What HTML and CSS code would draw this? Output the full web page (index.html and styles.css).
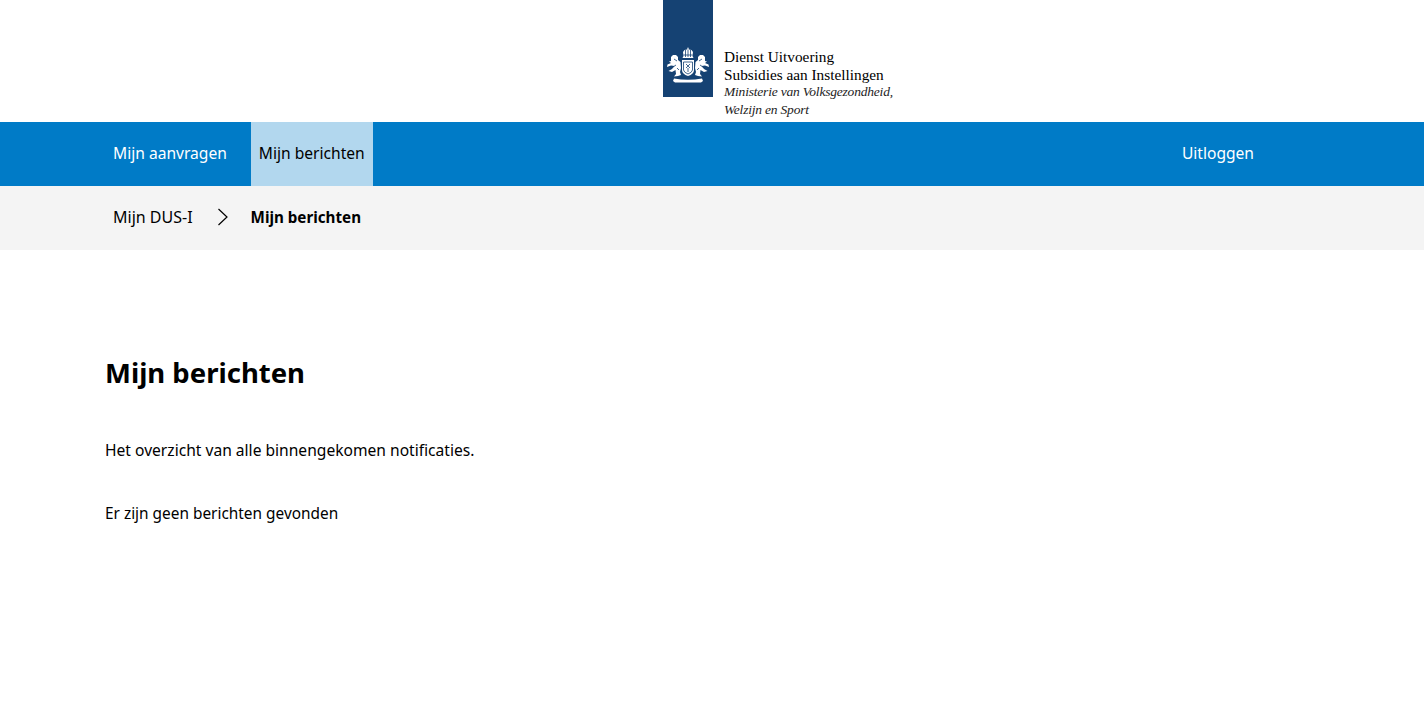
FILE: index.html
```html
<!DOCTYPE html>
<html lang="nl">
<head>
    <title>Mijn berichten</title>
    <link rel="stylesheet" href="styles.css">
</head>
<body>
    <header class="site-header">
        <div class="logo">
            <div class="logo-block">
                <svg class="crest" width="44" height="38" viewBox="0 0 44 38">
                    <g fill="#fff">
                        <!-- crown -->
                        <path d="M22 0 L23 2.500 L25.500 3 L27 5 L26.500 9 L27.500 11 H16.500 L17.500 9 L17 5 L18.500 3 L21 2.500 Z"/>
                        <!-- shield -->
                        <path d="M16 13 H28 V23 Q28 27 22 29 Q16 27 16 23 Z"/>
                        <!-- left lion -->
                        <path d="M7 8 L10 8 L12 10 L12 13 L14.500 15 L15 21 L14 25 L15 28 L12 29 L8 29.500 L10 27 L9.500 23 L6 25 L2.500 24 L6 22 L8.500 19 L5 18.500 L1 20 L1.500 17.500 L5 16 L3 14.500 L5 14 L5 10 Z"/>
                        <!-- right lion -->
                        <path d="M37 8 L34 8 L32 10 L32 13 L29.500 15 L29 21 L30 25 L29 28 L32 29 L36 29.500 L34 27 L34.500 23 L38 25 L41.500 24 L38 22 L35.500 19 L39 18.500 L43 20 L42.500 17.500 L39 16 L41 14.500 L39 14 L39 10 Z"/>
                        <!-- motto band -->
                        <path d="M8 31.500 Q22 34 36 31.500 L37 34 L35 35.500 H9 L7 34 Z"/>
                    </g>
                    <g fill="none" stroke="#154273" stroke-width="0.8">
                        <path d="M19.500 3 V10 M22 2.500 V10 M24.500 3 V10 M17.500 8 H26.500"/>
                        <path d="M17.500 15 H26.500 V23 Q26 25.500 22 27 Q18 25.500 17.500 23 Z"/>
                        <path d="M20 17 L24 21 M24 17 L20 21 M22 21 V25"/>
                        <path d="M8 12 L11 14 M7 20 L10 18 M11 21 L13 23 M36 12 L33 14 M37 20 L34 18 M33 21 L31 23"/>
                    </g>
                </svg>
            </div>
            <div class="logo-text">
                <span>Dienst Uitvoering</span>
                <span>Subsidies aan Instellingen</span>
                <em>Ministerie van Volksgezondheid,</em>
                <em>Welzijn en Sport</em>
            </div>
        </div>
    </header>

    <nav class="main-nav">
        <ul class="nav-list">
            <li><a href="#">Mijn aanvragen</a></li>
            <li><a href="#" class="active">Mijn berichten</a></li>
        </ul>
        <a href="#" class="nav-logout">Uitloggen</a>
    </nav>

    <div class="breadcrumb">
        <a href="#" class="crumb-link">Mijn DUS-I</a>
        <svg class="crumb-arrow" width="12" height="18" viewBox="0 0 12 18">
            <path d="M1.500 1 L10 9 L1.500 17" fill="none" stroke="#000" stroke-width="1.200"/>
        </svg>
        <strong>Mijn berichten</strong>
    </div>

    <main class="content">
        <h1>Mijn berichten</h1>
        <p class="intro">Het overzicht van alle binnengekomen notificaties.</p>
        <p class="empty">Er zijn geen berichten gevonden</p>
    </main>
</body>
</html>
```

FILE: styles.css
```css
body {
    font-family: "Noto Sans", Arial, sans-serif;
    font-size: 15.6px;
    color: #000;
    background-color: #fff;
    margin: 0;
    padding: 0;
}

a {
    color: inherit;
    text-decoration: none;
}

.site-header {
    height: 122px;
    display: flex;
    justify-content: center;
}

.logo {
    display: flex;
    align-items: flex-start;
    width: 230px;
    margin-left: 132px;
}

.logo-block {
    flex: none;
    width: 50px;
    height: 97px;
    background-color: #154273;
    display: flex;
    align-items: flex-end;
    justify-content: center;
}

.crest {
    margin-bottom: 12px;
}

.logo-text {
    display: flex;
    flex-direction: column;
    margin: 48px 0 0 11px;
    font-family: "Liberation Serif", serif;
    font-size: 15.3px;
    line-height: 17.5px;
    white-space: nowrap;
}

.logo-text em {
    font-size: 13.5px;
    letter-spacing: -0.2px;
    color: #222;
}

.main-nav {
    height: 64px;
    background-color: #007bc7;
    color: #fff;
    display: flex;
    justify-content: space-between;
    align-items: stretch;
    padding: 0 170px 0 105px;
}

.nav-list {
    display: flex;
    gap: 16px;
    list-style: none;
    margin: 0;
    padding: 0;
}

.nav-list li {
    display: flex;
}

.nav-list a {
    display: flex;
    align-items: center;
    height: 62px;
    padding: 0 8px 2px;
}

.nav-list a.active {
    background-color: #b2d7ee;
    color: #000;
}

.nav-logout {
    display: flex;
    align-items: center;
    height: 62px;
}

.breadcrumb {
    height: 62px;
    padding: 0 0 2px 113px;
    background-color: #f4f4f4;
    display: flex;
    align-items: center;
}

.crumb-link {
    font-size: 16px;
}

.breadcrumb strong {
    font-size: 15.2px;
}

.crumb-arrow {
    margin: 0 22px 0 24px;
}

.content {
    padding: 102px 105px 0;
}

h1 {
    font-size: 27.5px;
    line-height: 42px;
    font-weight: bold;
    margin: 0 0 44px;
}

p {
    line-height: 24px;
    margin: 0 0 40px;
}

.empty {
    font-size: 15.4px;
}
```
